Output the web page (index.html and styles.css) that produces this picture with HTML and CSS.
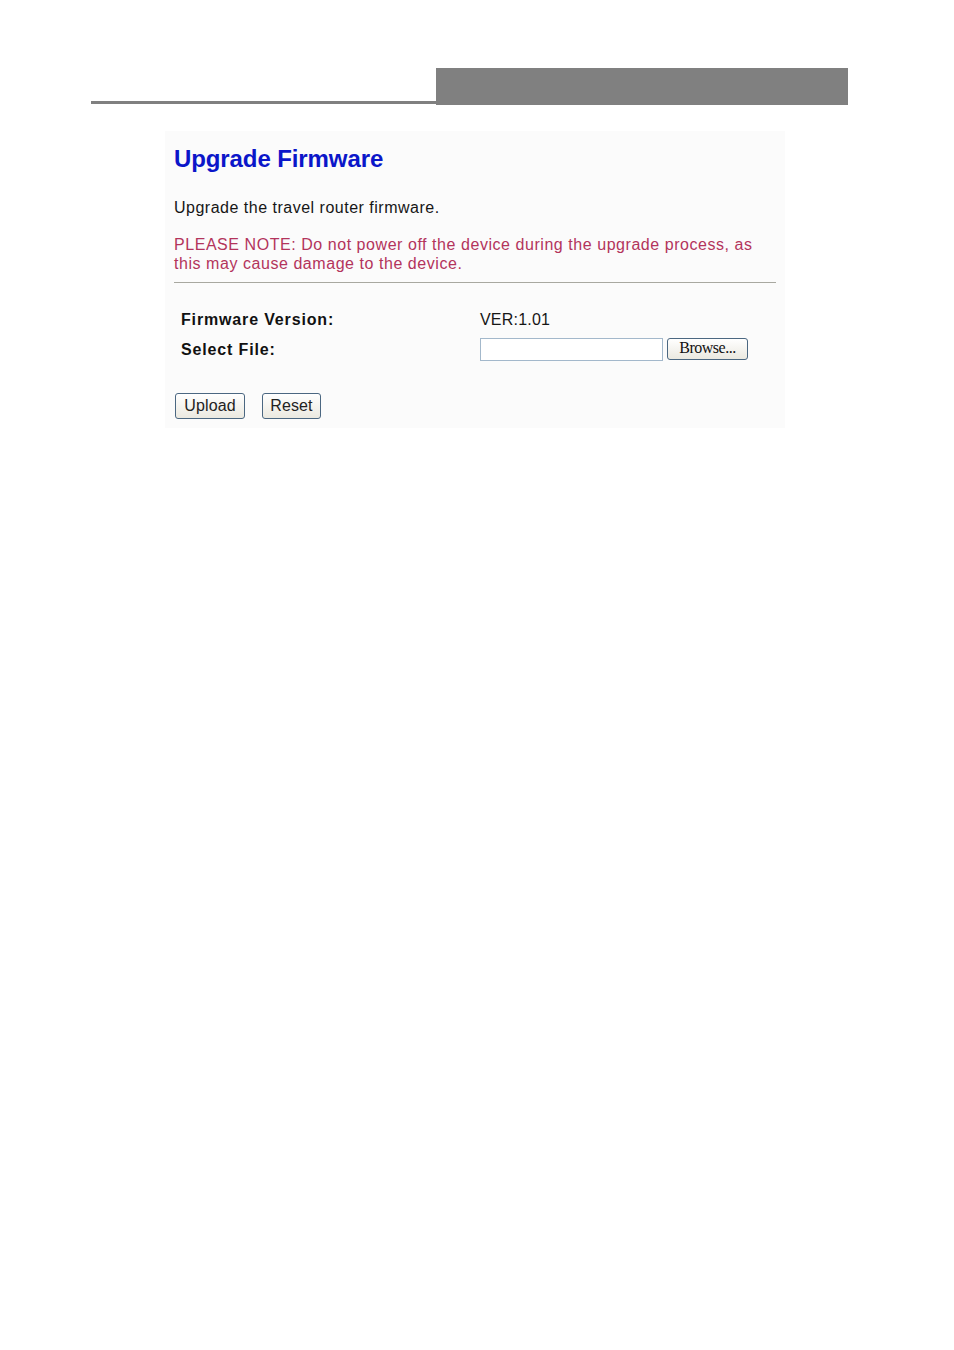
FILE: index.html
```html
<!DOCTYPE html>
<html>
<head>
<meta charset="utf-8">
<title>Upgrade Firmware</title>
<link rel="stylesheet" href="styles.css">
</head>
<body>
<div class="header">
  <div class="header-line"></div>
  <div class="header-box"></div>
</div>
<div class="panel">
  <h1 class="title">Upgrade Firmware</h1>
  <p class="intro">Upgrade the travel router firmware.</p>
  <p class="note">PLEASE NOTE: Do not power off the device during the upgrade process, as<br>this may cause damage to the device.</p>
  <div class="rule"></div>
  <div class="form-grid">
    <div class="label">Firmware Version:</div>
    <div class="value">VER:1.01</div>
    <div class="label">Select File:</div>
    <div class="value file">
      <span class="file-input"></span>
      <span class="browse">Browse...</span>
    </div>
  </div>
  <div class="actions">
    <button class="btn btn-upload">Upload</button>
    <button class="btn btn-reset">Reset</button>
  </div>
</div>
</body>
</html>
```
FILE: styles.css
```css
html, body {
  margin: 0;
  padding: 0;
  background: #ffffff;
}
body {
  font-family: "Liberation Sans", Arial, sans-serif;
  color: #161616;
}
.header {
  display: flex;
  align-items: flex-end;
  margin: 68px 0 0 91px;
  width: 757px;
}
.header-line {
  width: 345px;
  height: 3px;
  margin-bottom: 1px;
  background: #808080;
}
.header-box {
  width: 412px;
  height: 37px;
  background: #808080;
}
.panel {
  margin: 26px 0 0 165px;
  width: 611px;
  padding: 14px 0 9px 9px;
  background: #fbfbfb;
  box-sizing: content-box;
  min-height: 274px;
}
.title {
  margin: 0;
  font-size: 24px;
  line-height: 28px;
  font-weight: bold;
  letter-spacing: -0.1px;
  color: #0b16c9;
}
.intro {
  margin: 25px 0 0 0;
  font-size: 16px;
  line-height: 19px;
  letter-spacing: 0.5px;
  color: #161616;
}
.note {
  margin: 18px 0 0 0;
  font-size: 16px;
  line-height: 19px;
  letter-spacing: 0.55px;
  color: #b3345c;
}
.rule {
  margin-top: 9px;
  width: 602px;
  height: 1px;
  background: #a8a8a0;
}
.form-grid {
  display: grid;
  grid-template-columns: 306px auto;
  grid-auto-rows: auto;
  row-gap: 9px;
  align-items: center;
  margin-top: 27px;
}
.label {
  padding-left: 7px;
  font-size: 16px;
  line-height: 19px;
  font-weight: bold;
  letter-spacing: 0.85px;
  color: #111111;
}
.value {
  font-size: 16px;
  line-height: 19px;
  letter-spacing: 0.2px;
  color: #161616;
}
.file {
  display: flex;
  align-items: flex-start;
}
.file-input {
  display: block;
  width: 181px;
  height: 21px;
  border: 1px solid #a3b8cb;
  background: #ffffff;
}
.browse {
  display: block;
  margin-left: 4px;
  width: 79px;
  height: 20px;
  border: 1px solid #4b6781;
  border-radius: 3px;
  background: linear-gradient(#ffffff, #ebe9e0);
  font-family: "Liberation Serif", "Times New Roman", serif;
  font-size: 16px;
  line-height: 18px;
  letter-spacing: -0.5px;
  text-align: center;
  color: #111111;
}
.actions {
  display: flex;
  gap: 17px;
  margin: 32px 0 0 1px;
}
.btn {
  height: 26px;
  padding: 0;
  border: 1px solid #4b6781;
  border-radius: 3px;
  background: linear-gradient(#ffffff, #ebe9e0);
  font-family: "Liberation Sans", Arial, sans-serif;
  font-size: 16px;
  letter-spacing: 0.1px;
  color: #222222;
}
.btn-upload {
  width: 70px;
}
.btn-reset {
  width: 59px;
}
```
